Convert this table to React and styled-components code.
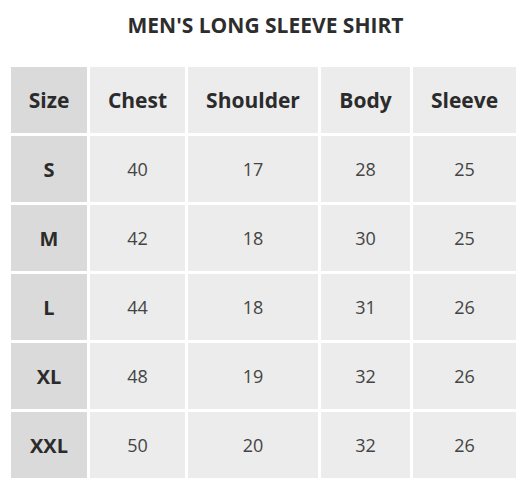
import styled, { createGlobalStyle } from "styled-components"

const GlobalStyle = createGlobalStyle`
    body {
        margin: 0;
        background: #fff;
        font-family: "Open Sans", "Liberation Sans", sans-serif;
    }
`

const Page = styled.div`
    width: 531px;
    padding-top: 11px;
    display: flex;
    flex-direction: column;
    align-items: center;
`

const Title = styled.h2`
    margin: 0;
    font-size: 21px;
    font-weight: 700;
    line-height: 28px;
    color: #2d2d2d;
`

const Grid = styled.div`
    margin-top: 28px;
    align-self: flex-start;
    margin-left: 11px;
    display: grid;
    grid-template-columns: 76px 95px 130px 89px 103px;
    grid-auto-rows: 66px;
    gap: 3px;
`

const Cell = styled.div`
    display: flex;
    align-items: center;
    justify-content: center;
    background: ${p => (p.$label ? "#dadada" : "#ececec")};
    color: ${p => (p.$bold ? "#2b2b2b" : "#444")};
    font-size: ${p => (p.$head ? "21px" : p.$bold ? "20px" : "18px")};
    font-weight: ${p => (p.$bold ? 700 : 400)};
`

const headers = ["Size", "Chest", "Shoulder", "Body", "Sleeve"]

const rows = [
    ["S", 40, 17, 28, 25],
    ["M", 42, 18, 30, 25],
    ["L", 44, 18, 31, 26],
    ["XL", 48, 19, 32, 26],
    ["XXL", 50, 20, 32, 26],
]

const App = () => {
    return <>
        <GlobalStyle />
        <Page>
            <Title>MEN'S LONG SLEEVE SHIRT</Title>
            <Grid>
                {headers.map((h, i) => (
                    <Cell key={h} $label={i === 0} $bold $head>{h}</Cell>
                ))}
                {rows.map(row => row.map((v, i) => (
                    <Cell key={row[0] + i} $label={i === 0} $bold={i === 0}>{v}</Cell>
                )))}
            </Grid>
        </Page>
    </>
}

export default App
